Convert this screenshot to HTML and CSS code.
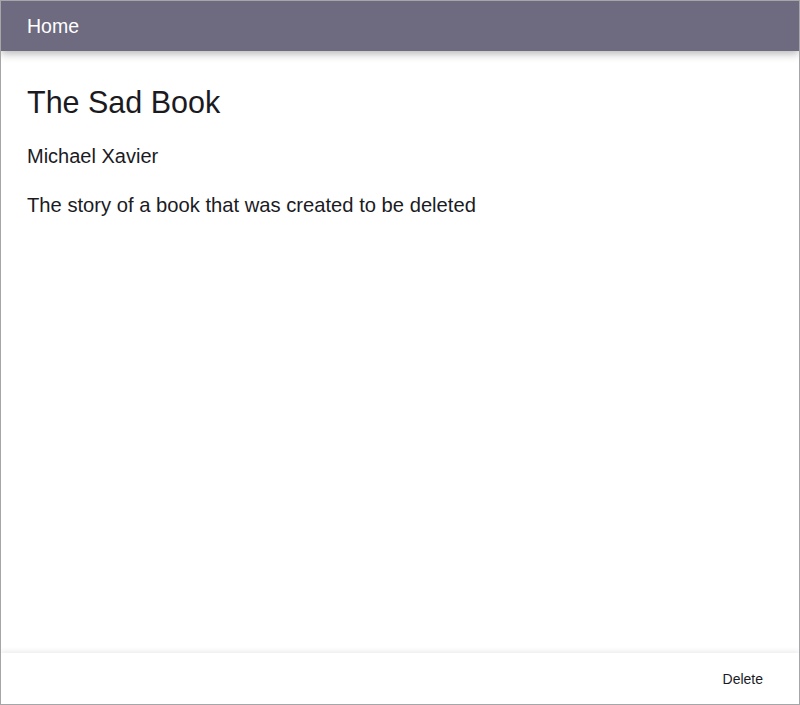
FILE: index.html
```html
<!DOCTYPE html>
<html lang="en">
<head>
<meta charset="utf-8">
<title>The Sad Book</title>
<link rel="stylesheet" href="styles.css">
</head>
<body>
<div class="window">
  <header class="appbar">
    <span class="appbar-title">Home</span>
  </header>
  <main class="content">
    <h1 class="book-title">The Sad Book</h1>
    <p class="book-author">Michael Xavier</p>
    <p class="book-desc">The story of a book that was created to be deleted</p>
  </main>
  <footer class="actions">
    <button class="action-btn" type="button">Delete</button>
  </footer>
</div>
</body>
</html>
```
FILE: styles.css
```css
* { box-sizing: border-box; }
html, body { margin: 0; padding: 0; background: #ffffff; }
body {
  font-family: "Liberation Sans", Arial, Helvetica, sans-serif;
  color: #1b1b1f;
}
.window {
  width: 800px;
  height: 705px;
  border: 1px solid #a6a6a8;
  display: flex;
  flex-direction: column;
  overflow: hidden;
}
.appbar {
  height: 50px;
  flex: 0 0 auto;
  background: #6e6a80;
  display: flex;
  align-items: center;
  padding-left: 26px;
  box-shadow: 0 3px 8px rgba(0, 0, 0, 0.28);
  position: relative;
  z-index: 1;
}
.appbar-title {
  color: #ffffff;
  font-size: 19.5px;
  line-height: 24px;
}
.content {
  flex: 1 1 auto;
  padding: 33px 26px 0;
}
.book-title {
  margin: 0 0 24px;
  font-size: 30.5px;
  line-height: 36px;
  font-weight: normal;
}
.book-author {
  margin: 0 0 25px;
  font-size: 20px;
  line-height: 24px;
}
.book-desc {
  margin: 0;
  font-size: 20.2px;
  line-height: 24px;
}
.actions {
  height: 51px;
  flex: 0 0 auto;
  display: flex;
  align-items: center;
  justify-content: flex-end;
  padding-right: 36px;
  box-shadow: 0 -2px 5px rgba(0, 0, 0, 0.08);
  background: #ffffff;
}
.action-btn {
  border: 0;
  background: transparent;
  padding: 0;
  font-family: "Liberation Sans", Arial, Helvetica, sans-serif;
  font-size: 14px;
  line-height: 16px;
  color: #1b1b1f;
}
```
